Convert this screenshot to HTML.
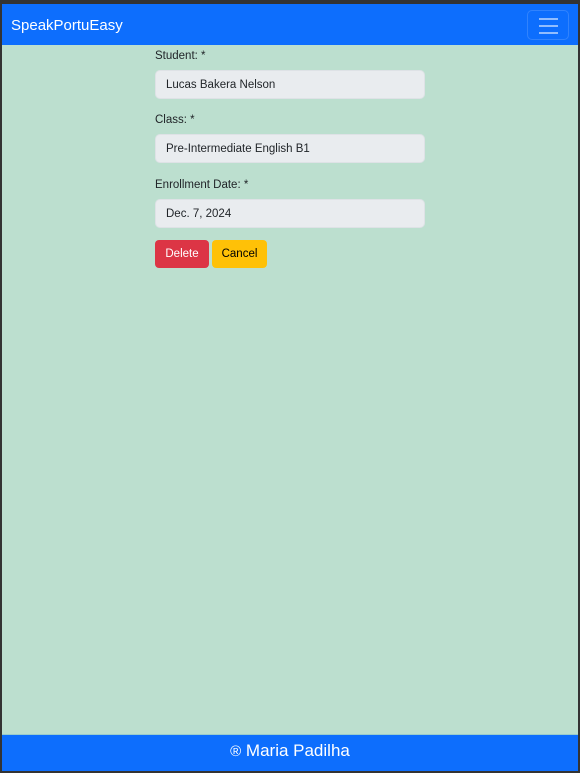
<!DOCTYPE html>
<html><head><style>
*{box-sizing:border-box;margin:0;padding:0}
body{width:580px;height:773px;background:#333;font-family:"Liberation Sans",sans-serif;position:relative;overflow:hidden}
.main{position:absolute;left:2px;top:4px;width:576px;height:767px;background:#bcdfcf}
.nav{position:absolute;left:2px;top:4px;width:576px;height:41px;background:#0d6efd}
.brand{position:absolute;left:9px;top:13px;color:#fff;font-size:15px}
.tog{position:absolute;top:6px;width:42px;height:30px;border:1px solid rgba(255,255,255,.15);border-radius:5px}
.tog i{position:absolute;left:11px;width:19px;height:2px;background:rgba(255,255,255,.55)}
.lbl{position:absolute;left:155px;font-size:11.5px;color:#212529}
.inp{position:absolute;left:155px;width:270px;height:29px;background:#e9ecef;border:1px solid #dee2e6;border-radius:5px;font-size:11.5px;color:#212529;padding:0 10px;line-height:28px}
.btn{position:absolute;top:240px;height:28px;border-radius:4px;font-size:11.5px;line-height:28px;text-align:center}
.foot{position:absolute;left:2px;top:734px;width:576px;height:37px;background:#0d6efd;color:#fff;text-align:center;font-size:17px;padding-top:6px;border-top:1px solid #9cc}
</style></head><body>
<div class="main"></div>
<div class="nav"><div class="brand">SpeakPortuEasy</div><div class="tog" style="left:525px"><i style="top:7px"></i><i style="top:14px"></i><i style="top:21px"></i></div></div>
<div class="lbl" style="top:50px">Student: *</div>
<div class="inp" style="top:70px">Lucas Bakera Nelson</div>
<div class="lbl" style="top:114px">Class: *</div>
<div class="inp" style="top:134px">Pre-Intermediate English B1</div>
<div class="lbl" style="top:179px">Enrollment Date: *</div>
<div class="inp" style="top:199px">Dec. 7, 2024</div>
<div class="btn" style="left:155px;width:54px;background:#dc3545;color:#fff">Delete</div>
<div class="btn" style="left:212px;width:55px;background:#ffc107;color:#000">Cancel</div>
<div class="foot"><span style="font-size:15px">®</span> Maria Padilha</div>
</body></html>
